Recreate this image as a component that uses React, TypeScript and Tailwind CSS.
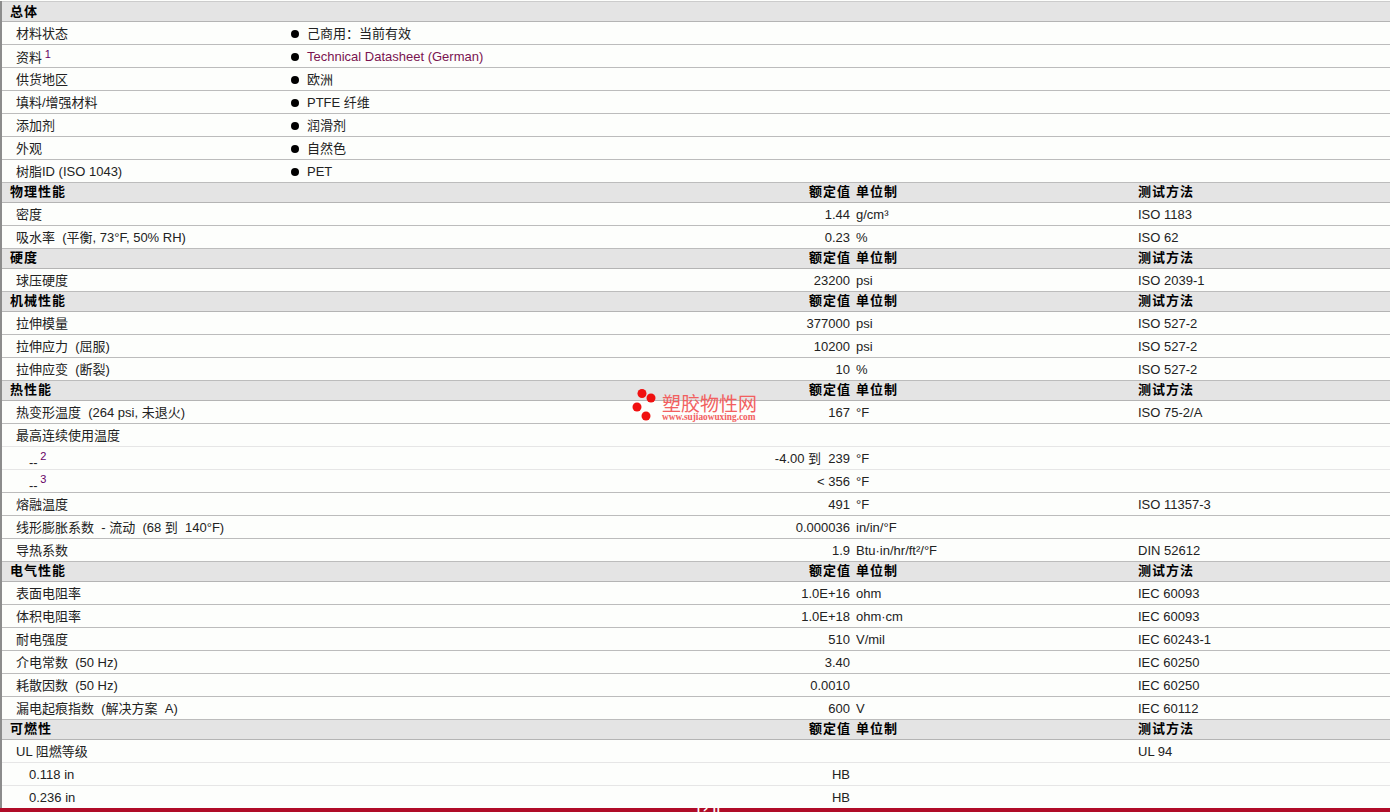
import React from 'react';

type Row = { label: React.ReactNode; value?: string; unit?: React.ReactNode; test?: string; sub?: boolean; light?: boolean };
type Section = { title: string; heads?: boolean; rows: Row[] };

const cjk = "font-['Liberation_Sans','Noto_Sans_CJK_SC',sans-serif]";

const Note = ({ n }: { n: number }) => <sup className="relative -top-[3px] ml-[1px] align-baseline text-[11px] text-[#660066]">{n}</sup>;
const Dash = () => <span className="relative top-[4px] -mr-[2px]">--</span>;

const sections: Section[] = [
  {
    title: '总体',
    rows: [
      { label: '材料状态', value: '己商用：当前有效' },
      { label: <><span className="relative top-[1px] -mr-[2px]">资料</span> <Note n={1} /></>, value: 'Technical Datasheet (German)' },
      { label: '供货地区', value: '欧洲' },
      { label: '填料/增强材料', value: 'PTFE 纤维' },
      { label: '添加剂', value: '润滑剂' },
      { label: '外观', value: '自然色' },
      { label: '树脂ID (ISO 1043)', value: 'PET' },
    ],
  },
  {
    title: '物理性能',
    heads: true,
    rows: [
      { label: '密度', value: '1.44', unit: 'g/cm³', test: 'ISO 1183' },
      { label: '吸水率  (平衡, 73°F, 50% RH)', value: '0.23', unit: '%', test: 'ISO 62' },
    ],
  },
  { title: '硬度', heads: true, rows: [{ label: '球压硬度', value: '23200', unit: 'psi', test: 'ISO 2039-1' }] },
  {
    title: '机械性能',
    heads: true,
    rows: [
      { label: '拉伸模量', value: '377000', unit: 'psi', test: 'ISO 527-2' },
      { label: '拉伸应力  (屈服)', value: '10200', unit: 'psi', test: 'ISO 527-2' },
      { label: '拉伸应变  (断裂)', value: '10', unit: '%', test: 'ISO 527-2' },
    ],
  },
  {
    title: '热性能',
    heads: true,
    rows: [
      { label: '热变形温度  (264 psi, 未退火)', value: '167', unit: '°F', test: 'ISO 75-2/A' },
      { label: '最高连续使用温度', light: true },
      { label: <><Dash /> <Note n={2} /></>, value: '-4.00 到  239', unit: '°F', sub: true, light: true },
      { label: <><Dash /> <Note n={3} /></>, value: '< 356', unit: '°F', sub: true },
      { label: '熔融温度', value: '491', unit: '°F', test: 'ISO 11357-3' },
      { label: '线形膨胀系数  - 流动  (68 到  140°F)', value: '0.000036', unit: 'in/in/°F' },
      { label: '导热系数', value: '1.9', unit: 'Btu·in/hr/ft²/°F', test: 'DIN 52612' },
    ],
  },
  {
    title: '电气性能',
    heads: true,
    rows: [
      { label: '表面电阻率', value: '1.0E+16', unit: 'ohm', test: 'IEC 60093' },
      { label: '体积电阻率', value: '1.0E+18', unit: 'ohm·cm', test: 'IEC 60093' },
      { label: '耐电强度', value: '510', unit: 'V/mil', test: 'IEC 60243-1' },
      { label: '介电常数  (50 Hz)', value: '3.40', test: 'IEC 60250' },
      { label: '耗散因数  (50 Hz)', value: '0.0010', test: 'IEC 60250' },
      { label: '漏电起痕指数  (解决方案  A)', value: '600', unit: 'V', test: 'IEC 60112' },
    ],
  },
  {
    title: '可燃性',
    heads: true,
    rows: [
      { label: 'UL 阻燃等级', test: 'UL 94', light: true },
      { label: '0.118 in', value: 'HB', sub: true, light: true },
      { label: '0.236 in', value: 'HB', sub: true, light: true },
    ],
  },
];

const Watermark = () => (
  <div className="absolute left-[632px] top-[388px] flex items-start">
    <svg width="29" height="34" viewBox="0 0 29 34">
      <circle cx="10" cy="5.5" r="4.5" fill="#f01010" />
      <circle cx="19" cy="10" r="4.5" fill="#f01010" />
      <circle cx="5" cy="19" r="4.5" fill="#f01010" />
      <circle cx="14" cy="28" r="4.5" fill="#f01010" />
    </svg>
    <div className="ml-[1px] flex flex-col pt-[9px]">
      <span className="text-[19px] leading-[16px] text-[#f26060]">塑胶物性网</span>
      <span className="font-['Liberation_Serif',serif] text-[9.3px] font-bold leading-[9px] text-[#f26060]">www.sujiaowuxing.com</span>
    </div>
  </div>
);

const App = () => (
  <div className={`relative h-[812px] w-[1390px] overflow-hidden bg-[#fdfefc] pt-[1px] text-[13px] text-[#222222] ${cjk}`}>
    <div className="border-l-2 border-[#8c8c8c]">
      {sections.map((section, s) => (
        <div key={section.title}>
          <div
            className={`grid grid-cols-[854px_282px_1fr] items-center border-b border-b-[#b4b4b4] bg-[#e4e4e4] font-bold leading-none tracking-[1px] text-black ${s === 0 ? 'h-[21px] border-t border-t-[#cccccc]' : 'h-[20px] pb-[2px]'}`}
          >
            <div className="flex justify-between pl-[8px] pr-[5px]">
              <span>{section.title}</span>
              {section.heads && <span>额定值</span>}
            </div>
            {section.heads && <span>单位制</span>}
            {section.heads && <span>测试方法</span>}
          </div>
          {section.rows.map((row, i) => (
            <div
              key={i}
              className={`grid h-[23px] grid-cols-[854px_282px_1fr] items-center border-b pt-[1px] leading-none ${row.light ? 'border-[#e6e6e6]' : 'border-[#bcbcbc]'}`}
            >
              {section.title === '总体' ? (
                <div className="col-span-3 flex items-center">
                  <span className="w-[289px] pl-[14px]">{row.label}</span>
                  <span className="h-[8px] w-[8px] rounded-full bg-black" />
                  <span className={`ml-[8px] ${i === 1 ? 'text-[#7a1450]' : ''}`}>{row.value}</span>
                </div>
              ) : (
                <>
                  <div className={`flex justify-between whitespace-pre pr-[6px] ${row.sub ? 'pl-[27px]' : 'pl-[14px]'}`}>
                    <span>{row.label}</span>
                    <span>{row.value}</span>
                  </div>
                  <span>{row.unit}</span>
                  <span>{row.test}</span>
                </>
              )}
            </div>
          ))}
        </div>
      ))}
    </div>
    <Watermark />
    <div className="absolute bottom-0 left-0 h-[4px] w-full overflow-hidden bg-[#b00c28]">
      <span className="absolute left-[697px] top-0 text-[12px] font-bold leading-[4px] text-white">[? ]]</span>
    </div>
  </div>
);

export default App;
